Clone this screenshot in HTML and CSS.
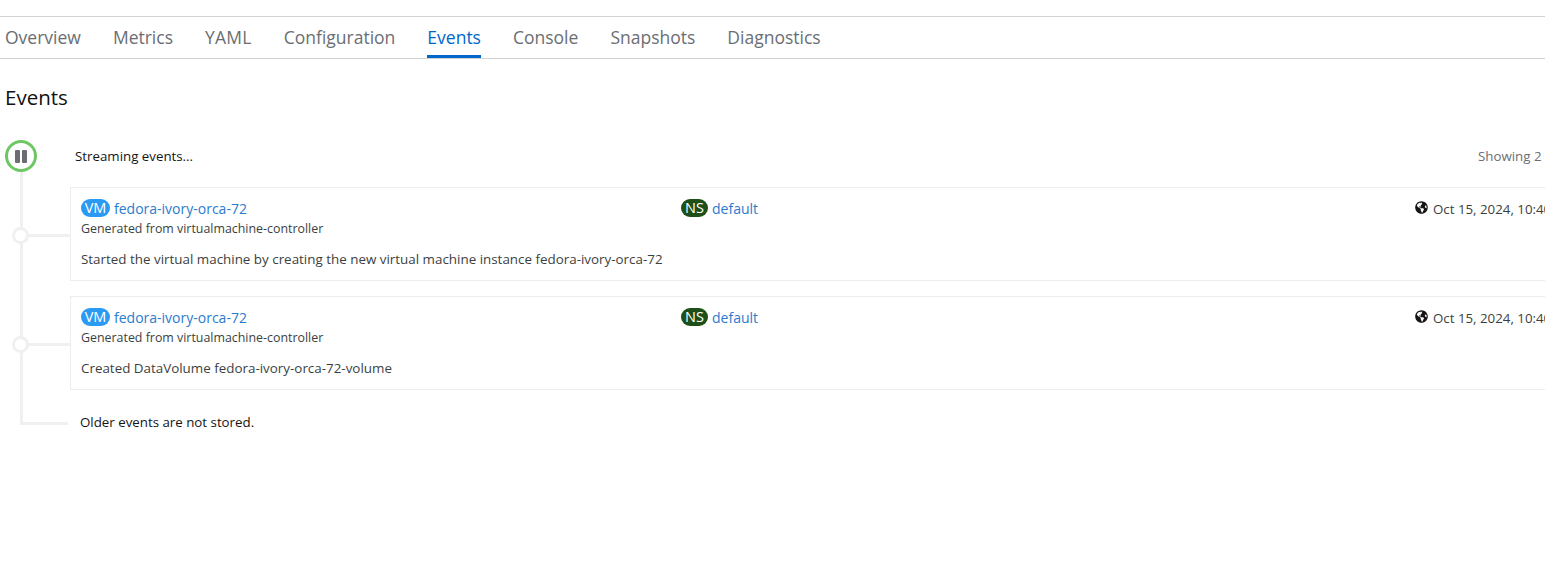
FILE: index.html
```html
<!DOCTYPE html>
<html lang="en">
<head>
    <meta charset="UTF-8">
    <meta name="viewport" content="width=device-width, initial-scale=1.0">
    <title>Events</title>
    <link rel="stylesheet" href="styles.css">
</head>
<body>
    <nav class="tabs">
        <a class="tab">Overview</a>
        <a class="tab">Metrics</a>
        <a class="tab">YAML</a>
        <a class="tab">Configuration</a>
        <a class="tab active">Events</a>
        <a class="tab">Console</a>
        <a class="tab">Snapshots</a>
        <a class="tab">Diagnostics</a>
    </nav>

    <h2 class="title">Events</h2>

    <div class="stream">
        <div class="stream-head">
            <button class="toggle" aria-label="Pause">
                <span class="bar"></span>
                <span class="bar"></span>
            </button>
            <span class="stream-status">Streaming events...</span>
            <span class="stream-count">Showing 2 events</span>
        </div>

        <div class="event-list">
            <div class="event">
                <div class="card">
                    <div class="card-top">
                        <div><span class="badge vm">VM</span><a class="link">fedora-ivory-orca-72</a></div>
                        <div><span class="badge ns">NS</span><a class="link">default</a></div>
                        <div class="time">
                            <svg class="globe" viewBox="0 0 496 512"><path d="M248 8C111.03 8 0 119.03 0 256s111.03 248 248 248 248-111.03 248-248S384.97 8 248 8zm82.29 357.6c-3.9 3.88-7.99 7.95-11.31 11.28-2.99 3-5.1 6.7-6.17 10.71-1.51 5.66-2.73 11.38-4.77 16.87l-17.39 46.85c-13.76 3-28 4.69-42.65 4.69v-27.38c1.69-12.62-7.64-36.26-22.63-51.25-6-6-9.37-14.14-9.37-22.63v-32.01c0-11.64-6.27-22.34-16.46-27.97-14.37-7.95-34.81-19.06-48.81-26.11-11.48-5.78-22.1-13.14-31.65-21.75l-.8-.72a114.792 114.792 0 0 1-18.06-20.74c-9.38-13.77-24.66-36.42-34.59-51.14 20.47-45.5 57.36-82.04 103.2-101.89l24.01 12.01C203.48 89.74 216 82.01 216 70.11v-11.3c7.99-1.29 16.12-2.11 24.39-2.4l28.3 28.3c6.25 6.25 6.25 16.38 0 22.63L264 112l-10.34 10.34c-3.12 3.12-3.12 8.19 0 11.31l4.69 4.69c3.12 3.12 3.12 8.19 0 11.31l-8 8a8.008 8.008 0 0 1-5.66 2.34h-8.99c-2.08 0-4.08.81-5.58 2.27l-9.92 9.65a8.008 8.008 0 0 0-1.58 9.31l15.59 31.19c2.66 5.32-1.21 11.58-7.15 11.58h-5.64c-1.93 0-3.79-.7-5.24-1.96l-9.28-8.06a16.017 16.017 0 0 0-15.55-3.1l-31.17 10.39a11.95 11.95 0 0 0-8.17 11.34c0 4.53 2.56 8.66 6.61 10.69l11.08 5.54c9.41 4.71 19.79 7.16 30.31 7.16s22.59 27.29 32 32h66.75c8.49 0 16.62 3.37 22.63 9.37l13.69 13.69a30.503 30.503 0 0 1 8.93 21.57 46.536 46.536 0 0 1-13.72 32.98zM417 274.25c-5.79-1.45-10.84-5-14.15-9.97l-17.98-26.97a23.97 23.97 0 0 1 0-26.62l19.59-29.38c2.32-3.47 5.5-6.29 9.24-8.15l12.98-6.49C440.2 193.59 448 223.87 448 256c0 8.67-.74 17.16-1.82 25.54L417 274.25z"/></svg>
                            <span>Oct 15, 2024, 10:40 AM</span>
                        </div>
                    </div>
                    <div class="source">Generated from virtualmachine-controller</div>
                    <div class="message">Started the virtual machine by creating the new virtual machine instance fedora-ivory-orca-72</div>
                </div>
            </div>

            <div class="event">
                <div class="card">
                    <div class="card-top">
                        <div><span class="badge vm">VM</span><a class="link">fedora-ivory-orca-72</a></div>
                        <div><span class="badge ns">NS</span><a class="link">default</a></div>
                        <div class="time">
                            <svg class="globe" viewBox="0 0 496 512"><path d="M248 8C111.03 8 0 119.03 0 256s111.03 248 248 248 248-111.03 248-248S384.97 8 248 8zm82.29 357.6c-3.9 3.88-7.99 7.95-11.31 11.28-2.99 3-5.1 6.7-6.17 10.71-1.51 5.66-2.73 11.38-4.77 16.87l-17.39 46.85c-13.76 3-28 4.69-42.65 4.69v-27.38c1.69-12.62-7.64-36.26-22.63-51.25-6-6-9.37-14.14-9.37-22.63v-32.01c0-11.64-6.27-22.34-16.46-27.97-14.37-7.95-34.81-19.06-48.81-26.11-11.48-5.78-22.1-13.14-31.65-21.75l-.8-.72a114.792 114.792 0 0 1-18.06-20.74c-9.38-13.77-24.66-36.42-34.59-51.14 20.47-45.5 57.36-82.04 103.2-101.89l24.01 12.01C203.48 89.74 216 82.01 216 70.11v-11.3c7.99-1.29 16.12-2.11 24.39-2.4l28.3 28.3c6.25 6.25 6.25 16.38 0 22.63L264 112l-10.34 10.34c-3.12 3.12-3.12 8.19 0 11.31l4.69 4.69c3.12 3.12 3.12 8.19 0 11.31l-8 8a8.008 8.008 0 0 1-5.66 2.34h-8.99c-2.08 0-4.08.81-5.58 2.27l-9.92 9.65a8.008 8.008 0 0 0-1.58 9.31l15.59 31.19c2.66 5.32-1.21 11.58-7.15 11.58h-5.64c-1.93 0-3.79-.7-5.24-1.96l-9.28-8.06a16.017 16.017 0 0 0-15.55-3.1l-31.17 10.39a11.95 11.95 0 0 0-8.17 11.34c0 4.53 2.56 8.66 6.61 10.69l11.08 5.54c9.41 4.71 19.79 7.16 30.31 7.16s22.59 27.29 32 32h66.75c8.49 0 16.62 3.37 22.63 9.37l13.69 13.69a30.503 30.503 0 0 1 8.93 21.57 46.536 46.536 0 0 1-13.72 32.98zM417 274.25c-5.79-1.45-10.84-5-14.15-9.97l-17.98-26.97a23.97 23.97 0 0 1 0-26.62l19.59-29.38c2.32-3.47 5.5-6.29 9.24-8.15l12.98-6.49C440.2 193.59 448 223.87 448 256c0 8.67-.74 17.16-1.82 25.54L417 274.25z"/></svg>
                            <span>Oct 15, 2024, 10:40 AM</span>
                        </div>
                    </div>
                    <div class="source">Generated from virtualmachine-controller</div>
                    <div class="message">Created DataVolume fedora-ivory-orca-72-volume</div>
                </div>
            </div>
        </div>

        <div class="older">Older events are not stored.</div>
    </div>
</body>
</html>
```

FILE: styles.css
```css
html {
    overflow: hidden;
}
body {
    margin: 0;
    width: 1640px;
    height: 573px;
    overflow: hidden;
    padding-top: 16px;
    box-sizing: border-box;
    background: white;
    font-family: "Open Sans", Arial, sans-serif;
    font-size: 13.3px;
    color: #3c3f42;
}
.tabs {
    display: flex;
    gap: 32px;
    height: 43px;
    width: 1545px;
    padding-left: 5px;
    box-sizing: border-box;
    border-top: 1px solid #d2d2d2;
    border-bottom: 1px solid #d2d2d2;
}
.tab {
    height: 40px;
    line-height: 40px;
    font-size: 17.5px;
    color: #6a6e73;
}
.tab:nth-child(3) {
    letter-spacing: 0.25px;
}
.tab.active {
    color: #06c;
    border-bottom: 3px solid #06c;
    height: 38px;
}
.title {
    margin: 25px 0 0 5px;
    font-size: 20.5px;
    line-height: 26px;
    font-weight: 400;
    color: #111;
}
.stream {
    position: relative;
    margin-top: 30px;
    padding-left: 5px;
}
/* the rail behind the events, ends in the hook at the "older events" line */
.stream::before {
    content: "";
    position: absolute;
    left: 20px;
    top: 20px;
    width: 45px;
    height: 262px;
    border-left: 3px solid #f0f0f0;
    border-bottom: 3px solid #f0f0f0;
}
.stream-head {
    position: relative;
    display: flex;
    align-items: center;
    height: 32px;
    width: 1540px;
}
.toggle {
    display: flex;
    justify-content: center;
    align-items: center;
    gap: 2px;
    width: 32px;
    height: 32px;
    padding: 0;
    border: 3px solid #6ec664;
    border-radius: 50%;
    background: white;
}
.bar {
    width: 5px;
    height: 13px;
    background: #6a6e73;
    border-radius: 1px;
}
.stream-status {
    margin-left: 38px;
    color: #151515;
}
.stream-count {
    margin-left: auto;
    width: 67px;
    white-space: nowrap;
    color: #6a6e73;
}
.event-list {
    display: flex;
    flex-direction: column;
    gap: 15px;
    margin: 15px 0 0 65px;
}
.event {
    position: relative;
}
.event::before {
    content: "";
    position: absolute;
    left: -49px;
    top: 47px;
    width: 49px;
    height: 3px;
    background: #f0f0f0;
}
.event::after {
    content: "";
    position: absolute;
    left: -58px;
    top: 40px;
    width: 11px;
    height: 11px;
    border: 3px solid #f0f0f0;
    border-radius: 50%;
    background: white;
}
.card {
    height: 94px;
    box-sizing: border-box;
    padding: 11px 10px 0;
    border: 1px solid #ededed;
}
.card-top {
    display: grid;
    grid-template-columns: 600px 734px 1fr;
    height: 18px;
    line-height: 19px;
}
.badge {
    display: inline-block;
    width: 29px;
    height: 18px;
    margin-right: 4px;
    border-radius: 9px;
    line-height: 18px;
    text-align: center;
    color: white;
    font-size: 14.5px;
    vertical-align: top;
}
.badge.vm {
    background: #2b9af3;
}
.badge.ns {
    width: 27px;
    background: #1e4f18;
}
.link {
    font-size: 14px;
    color: #2b7bd0;
}
.time {
    display: flex;
    align-items: center;
    white-space: nowrap;
}
.globe {
    width: 13px;
    height: 13px;
    margin: -4px 5px 0 0;
    fill: #151515;
}
.source {
    margin-top: 3px;
    font-size: 12.4px;
    line-height: 18px;
}
.message {
    margin-top: 12px;
    font-size: 13.4px;
    line-height: 18px;
}
.older {
    margin: 23px 0 0 75px;
    line-height: 18px;
    color: #151515;
}
```
